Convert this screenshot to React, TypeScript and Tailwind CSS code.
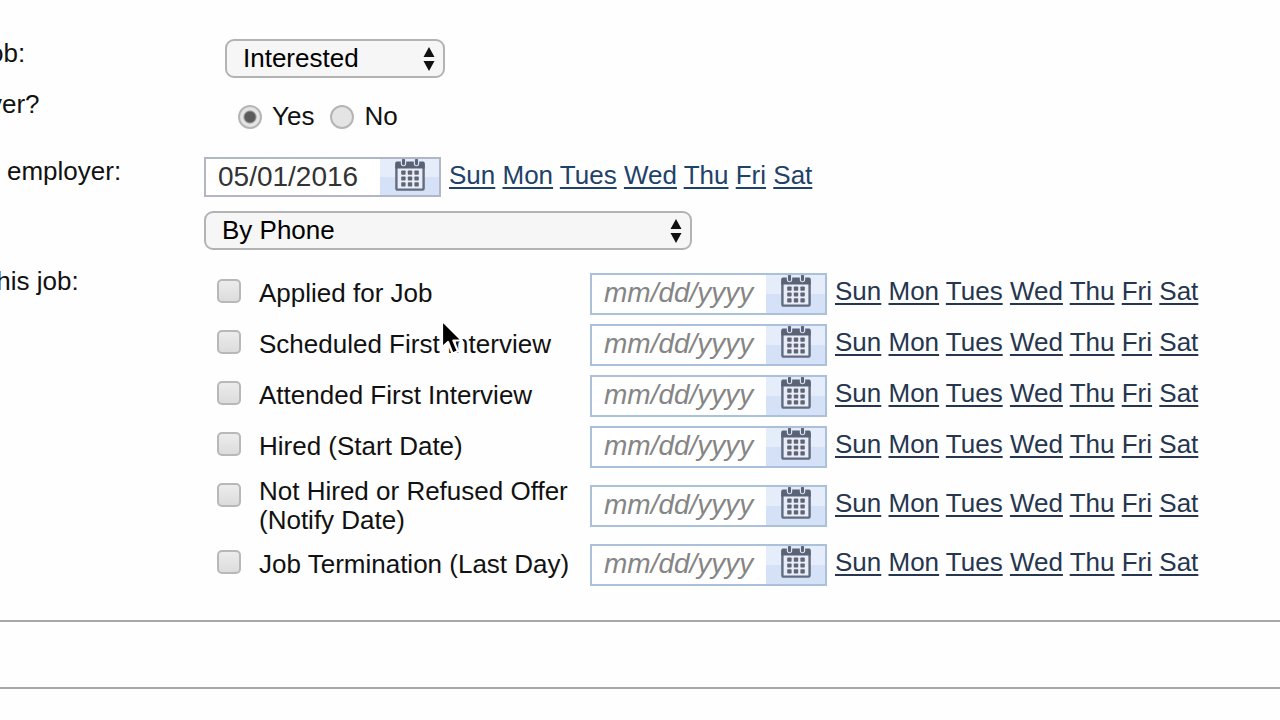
import { useState } from 'react';
import type { ReactNode } from 'react';

const DAYS = ['Sun', 'Mon', 'Tues', 'Wed', 'Thu', 'Fri', 'Sat'];

const STEPS = [
  { id: 'applied', label: 'Applied for Job' },
  { id: 'scheduled', label: 'Scheduled First Interview' },
  { id: 'attended', label: 'Attended First Interview' },
  { id: 'hired', label: 'Hired (Start Date)' },
  { id: 'refused', label: 'Not Hired or Refused Offer (Notify Date)', tall: true },
  { id: 'terminated', label: 'Job Termination (Last Day)' },
];

function CalendarIcon() {
  return (
    <svg viewBox="0 0 30 33" className="h-[33px] w-[30px]" aria-hidden="true">
      <rect x="1.4" y="5" width="27.2" height="25.6" rx="1" fill="#e9edf7" stroke="#626c80" strokeWidth="2.4" />
      <path d="M0.3 4a1.5 1.5 0 0 1 1.5-1.5h26.4A1.5 1.5 0 0 1 29.7 4v5.5H.3z" fill="#5a6376" />
      <path d="M8.5 0v4.5M21.5 0v4.5" stroke="#dde5f3" strokeWidth="5.4" strokeLinecap="round" />
      <path d="M8.5 1.2v3.6M21.5 1.2v3.6" stroke="#5a6376" strokeWidth="3" strokeLinecap="round" />
      {[11.5, 17.4, 23.3].map((y) =>
        [6.2, 12.8, 19.4].map((x) => (
          <rect key={`${x}-${y}`} x={x} y={y} width="4.4" height="4.2" rx="0.8" fill="#5f6577" />
        ))
      )}
    </svg>
  );
}

function DateField({ label, value, muted }: { label: string; value?: string; muted?: boolean }) {
  return (
    <div
      className={`flex w-[237px] shrink-0 border-2 bg-white ${
        muted ? 'h-[42px] border-[#abc0db]' : 'h-10 border-[#b1b7c6]'
      }`}
    >
      <input
        type="text"
        aria-label={label}
        defaultValue={value}
        placeholder="mm/dd/yyyy"
        className="min-w-0 flex-1 pb-px pl-3 text-[28px] leading-8 text-[#333] outline-none placeholder:text-[#858585] placeholder:italic"
      />
      <button
        type="button"
        aria-label={`Pick ${label}`}
        className="flex w-[59px] items-start justify-center bg-linear-to-b from-[#e5edfb] from-50% to-[#d5e1f6] to-50%"
      >
        <CalendarIcon />
      </button>
    </div>
  );
}

function DayLinks({ muted }: { muted?: boolean }) {
  return (
    <div
      className={`pb-1 pl-2 whitespace-nowrap ${
        muted ? 'text-[#26364f] decoration-[#3f4354]' : 'text-[#1f4269] decoration-[#2b5c96]'
      }`}
    >
      {DAYS.map((day) => (
        <span key={day}>
          <a href="#" className="underline decoration-2 underline-offset-3 decoration-inherit">
            {day}
          </a>{' '}
        </span>
      ))}
    </div>
  );
}

function Select({ id, label, options, width }: { id: string; label: string; options: string[]; width: string }) {
  return (
    <div className={`relative ${width}`}>
      <select
        id={id}
        aria-label={label}
        className="block h-[39px] w-full appearance-none rounded-[9px] border-2 border-[#b3b3b3] bg-[#f6f6f6] pb-px pl-4 text-black outline-none"
      >
        {options.map((option) => (
          <option key={option}>{option}</option>
        ))}
      </select>
      <svg viewBox="0 0 12 24" className="pointer-events-none absolute top-2 right-[10px] h-6 w-3" aria-hidden="true">
        <path d="M6 0l5.5 10H.5zM6 24L.5 14h11z" fill="#111" />
      </svg>
    </div>
  );
}

function Row({ label, indent, height, children }: { label: string; indent?: boolean; height: string; children: ReactNode }) {
  return (
    <div className={`flex ${height}`}>
      <div className="w-[204px] shrink-0">
        <div className={`-ml-[11px] ${indent ? 'pl-[18px]' : ''}`}>{label}</div>
      </div>
      <div className="min-w-0 flex-1">{children}</div>
    </div>
  );
}

function MouseCursor() {
  return (
    <svg viewBox="0 0 24 38" className="pointer-events-none absolute top-[319px] left-[440px] h-[38px] w-6" aria-hidden="true">
      <path
        d="M2 1.5v27l6-5.5 4.5 11.5 5.5-2.2-4.6-10.8h8.6z"
        fill="#000"
        stroke="#fff"
        strokeWidth="2.2"
        strokeLinejoin="round"
      />
    </svg>
  );
}

export default function App() {
  const [contacted, setContacted] = useState('Yes');

  return (
    <div className="relative min-h-screen overflow-hidden bg-[#fefefe] pt-[39px] font-['Liberation_Sans',Arial,sans-serif] text-[26px] leading-[29px] text-[#111]">
      <Row label="ob:" height="min-h-[51px]">
        <div className="pl-[21px]">
          <Select id="status" label="ob:" options={['Interested']} width="w-[220px]" />
        </div>
      </Row>

      <Row label="ver?" height="min-h-[67px]">
        <div className="flex gap-4 pt-3 pl-[34px]">
          {['Yes', 'No'].map((answer) => (
            <label key={answer} className="flex items-center gap-[10px]">
              <input
                type="radio"
                name="contacted"
                checked={contacted === answer}
                onChange={() => setContacted(answer)}
                className="size-6 appearance-none rounded-full border-2 border-[#b5b5b5] bg-[#e4e4e4] checked:bg-radial checked:from-[#5c5c5c] checked:from-35% checked:to-[#e4e4e4] checked:to-50%"
              />
              {answer}
            </label>
          ))}
        </div>
      </Row>

      <Row label="employer:" indent height="min-h-[110px]">
        <div className="flex flex-col gap-[14px]">
          <div className="flex items-center">
            <DateField label="contact date" value="05/01/2016" />
            <DayLinks />
          </div>
          <Select id="method" label="employer:" options={['By Phone']} width="w-[488px]" />
        </div>
      </Row>

      <Row label="this job:" height="min-h-[353px]">
        <div className="pt-px">
          {STEPS.map((step) => (
            <div key={step.id} className={`flex items-center ${step.tall ? 'h-[67px]' : 'h-[51px]'}`}>
              <label htmlFor={step.id} className="flex w-[386px] shrink-0 self-stretch pl-[13px]">
                <input
                  id={step.id}
                  type="checkbox"
                  className="mt-[11px] size-6 shrink-0 appearance-none rounded-[5px] border-2 border-[#b8b8b8] bg-linear-to-b from-[#ececec] to-[#dcdcdc] checked:bg-[#555] checked:bg-none"
                />
                <span className="self-center pr-4 pl-[18px]">{step.label}</span>
              </label>
              <DateField label={`${step.label} date`} muted />
              <DayLinks muted />
            </div>
          ))}
        </div>
      </Row>

      <div className="h-[69px] border-y-2 border-[#a8a8a8]" />

      <MouseCursor />
    </div>
  );
}
